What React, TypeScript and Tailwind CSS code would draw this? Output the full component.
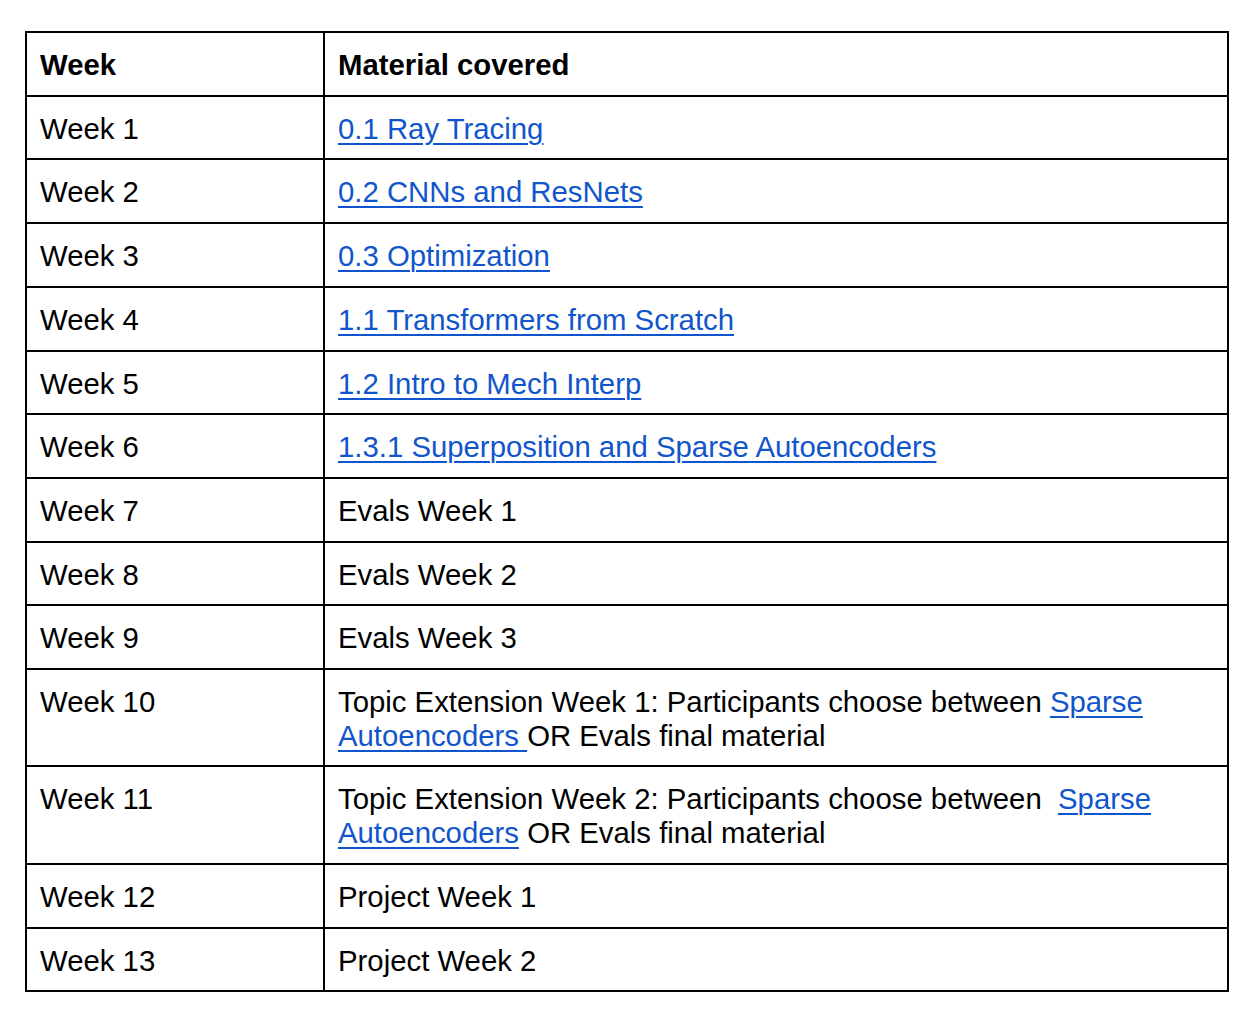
const weeks: { week: string; material: React.ReactNode }[] = [
  { week: 'Week 1', material: <Link>0.1 Ray Tracing</Link> },
  { week: 'Week 2', material: <Link>0.2 CNNs and ResNets</Link> },
  { week: 'Week 3', material: <Link>0.3 Optimization</Link> },
  { week: 'Week 4', material: <Link>1.1 Transformers from Scratch</Link> },
  { week: 'Week 5', material: <Link>1.2 Intro to Mech Interp</Link> },
  { week: 'Week 6', material: <Link>1.3.1 Superposition and Sparse Autoencoders</Link> },
  { week: 'Week 7', material: 'Evals Week 1' },
  { week: 'Week 8', material: 'Evals Week 2' },
  { week: 'Week 9', material: 'Evals Week 3' },
  {
    week: 'Week 10',
    material: (
      <>
        Topic Extension Week 1: Participants choose between <Link>Sparse Autoencoders </Link>OR Evals final material
      </>
    ),
  },
  {
    week: 'Week 11',
    material: (
      <>
        Topic Extension Week 2: Participants choose between{'\u00a0 '}<Link>Sparse Autoencoders</Link> OR Evals final material
      </>
    ),
  },
  { week: 'Week 12', material: 'Project Week 1' },
  { week: 'Week 13', material: 'Project Week 2' },
];

function Link({ children }: { children: React.ReactNode }) {
  return (
    <a href="#" className="text-[#1155cc] underline decoration-2 underline-offset-[4px]">
      {children}
    </a>
  );
}

export default function App() {
  return (
    <div
      className="min-h-screen bg-white text-black pl-[25px] pt-[31px]"
      style={{ fontFamily: '"Liberation Sans", Arial, sans-serif' }}
    >
      <table className="w-[1204px] border-separate border-spacing-0 border-l-2 border-t-2 border-black text-[29.33px] leading-[33.7px] table-fixed">
        <colgroup>
          <col className="w-[298px]" />
          <col />
        </colgroup>
        <thead>
          <tr>
            <th className="border-r-2 border-b-2 border-black px-[13px] pt-[15px] pb-[13px] text-left align-top font-bold">Week</th>
            <th className="border-r-2 border-b-2 border-black px-[13px] pt-[15px] pb-[13px] text-left align-top font-bold">Material covered</th>
          </tr>
        </thead>
        <tbody>
          {weeks.map((row) => (
            <tr key={row.week}>
              <td className="border-r-2 border-b-2 border-black px-[13px] pt-[15px] pb-[13px] align-top">{row.week}</td>
              <td className="border-r-2 border-b-2 border-black px-[13px] pt-[15px] pb-[13px] align-top">{row.material}</td>
            </tr>
          ))}
        </tbody>
      </table>
    </div>
  );
}
